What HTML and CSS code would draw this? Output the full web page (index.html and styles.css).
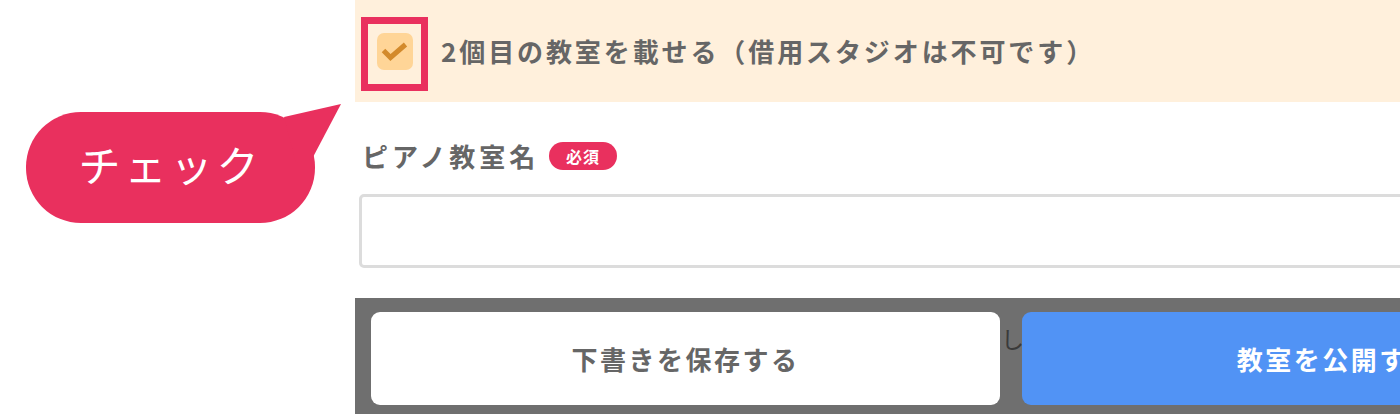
FILE: index.html
```html
<!DOCTYPE html>
<html lang="ja">
<head>
<meta charset="utf-8">
<title>教室を載せる</title>
<link rel="stylesheet" href="styles.css">
</head>
<body>
<div class="page">
  <aside class="side">
    <div class="callout">
      <svg class="callout-shape" width="316" height="121" viewBox="0 0 316 121">
        <rect x="0" y="9" width="289" height="111" rx="55" ry="55" fill="#e9305e"/>
        <polygon points="258,14 315,1 286,56 270,60" fill="#e9305e"/>
      </svg>
      <div class="callout-text">チェック</div>
    </div>
  </aside>
  <main class="main">
    <div class="option-band">
      <div class="check-wrap">
        <span class="check-box">
          <svg width="36" height="37" viewBox="0 0 36 37"><path d="M6.5 17.5 L13.5 24.5 L28.5 11.5" fill="none" stroke="#d38a2b" stroke-width="5" stroke-linejoin="miter"/></svg>
        </span>
        <span class="highlight"></span>
      </div>
      <span class="option-text">2個目の教室を載せる（借用スタジオは不可です）</span>
    </div>
    <div class="field">
      <div class="label-row">
        <span class="label">ピアノ教室名</span>
        <span class="badge">必須</span>
      </div>
      <div class="input"></div>
    </div>
    <div class="action-bar">
      <button class="btn btn-draft">下書きを保存する</button>
      <span class="behind">し</span>
      <button class="btn btn-publish">教室を公開する</button>
    </div>
  </main>
</div>
</body>
</html>
```

FILE: styles.css
```css
html, body {
  margin: 0;
  padding: 0;
  overflow: hidden;
  background: #ffffff;
}
body {
  width: 1400px;
  height: 414px;
  font-family: "Noto Sans CJK JP", "Noto Sans", sans-serif;
}
.page {
  display: flex;
  width: 2000px;
  height: 414px;
}
.side {
  position: relative;
  width: 355px;
  flex: none;
}
.callout {
  position: absolute;
  left: 26px;
  top: 103px;
  width: 316px;
  height: 121px;
}
.callout-shape {
  position: absolute;
  left: 0;
  top: 0;
}
.callout-text {
  position: absolute;
  left: 0;
  top: 9px;
  width: 289px;
  height: 111px;
  display: flex;
  align-items: center;
  justify-content: center;
  color: #ffffff;
  font-size: 42px;
  font-weight: 400;
  letter-spacing: 4px;
  padding-bottom: 9px;
  padding-left: 0;
  box-sizing: border-box;
}
.main {
  width: 1320px;
  flex: none;
  display: flex;
  flex-direction: column;
}
.option-band {
  height: 102px;
  background: #fff0dc;
  display: flex;
  align-items: center;
  padding-left: 22px;
  box-sizing: border-box;
}
.check-wrap {
  position: relative;
  width: 36px;
  height: 37px;
  flex: none;
}
.check-box {
  display: block;
  width: 36px;
  height: 37px;
  background: #ffd597;
  border-radius: 7px;
}
.check-box svg {
  display: block;
}
.highlight {
  position: absolute;
  left: -16px;
  top: -16px;
  width: 53px;
  height: 60px;
  border: 7px solid #e9305e;
}
.option-text {
  margin-left: 28px;
  font-size: 26px;
  font-weight: 700;
  color: #666666;
  letter-spacing: 2.9px;
  line-height: 32px;
  white-space: nowrap;
}
.field {
  padding-left: 4px;
  display: flex;
  flex-direction: column;
}
.label-row {
  margin-top: 40px;
  height: 28px;
  display: flex;
  align-items: center;
}
.label {
  margin-left: 3px;
  font-size: 26px;
  font-weight: 700;
  color: #666666;
  letter-spacing: 3.9px;
  line-height: 28px;
}
.badge {
  margin-left: 10px;
  width: 68px;
  height: 28px;
  border-radius: 14px;
  background: #e9305e;
  color: #ffffff;
  font-size: 16px;
  font-weight: 700;
  display: flex;
  align-items: center;
  justify-content: center;
  letter-spacing: 1px;
}
.input {
  margin-top: 24px;
  height: 74px;
  border: 3px solid #dcdcdc;
  border-radius: 5px;
  box-sizing: border-box;
  background: #ffffff;
}
.action-bar {
  margin-top: 30px;
  flex: 1;
  background: #6f6f6f;
  display: flex;
  align-items: flex-start;
  padding: 14px 0 0 16px;
}
.btn {
  width: 629px;
  height: 93px;
  border: none;
  border-radius: 9px;
  font-family: "Noto Sans CJK JP", "Noto Sans", sans-serif;
  font-size: 26px;
  font-weight: 700;
  letter-spacing: 2.5px;
  flex: none;
  padding: 0;
}
.btn-draft {
  background: #ffffff;
  color: #666666;
}
.btn-publish {
  background: #5193f5;
  color: #ffffff;
}
.behind {
  width: 22px;
  flex: none;
  color: #3a3a3a;
  font-size: 23px;
  line-height: 24px;
  margin-top: 14px;
  padding-left: 1px;
  box-sizing: border-box;
  white-space: nowrap;
}
```
